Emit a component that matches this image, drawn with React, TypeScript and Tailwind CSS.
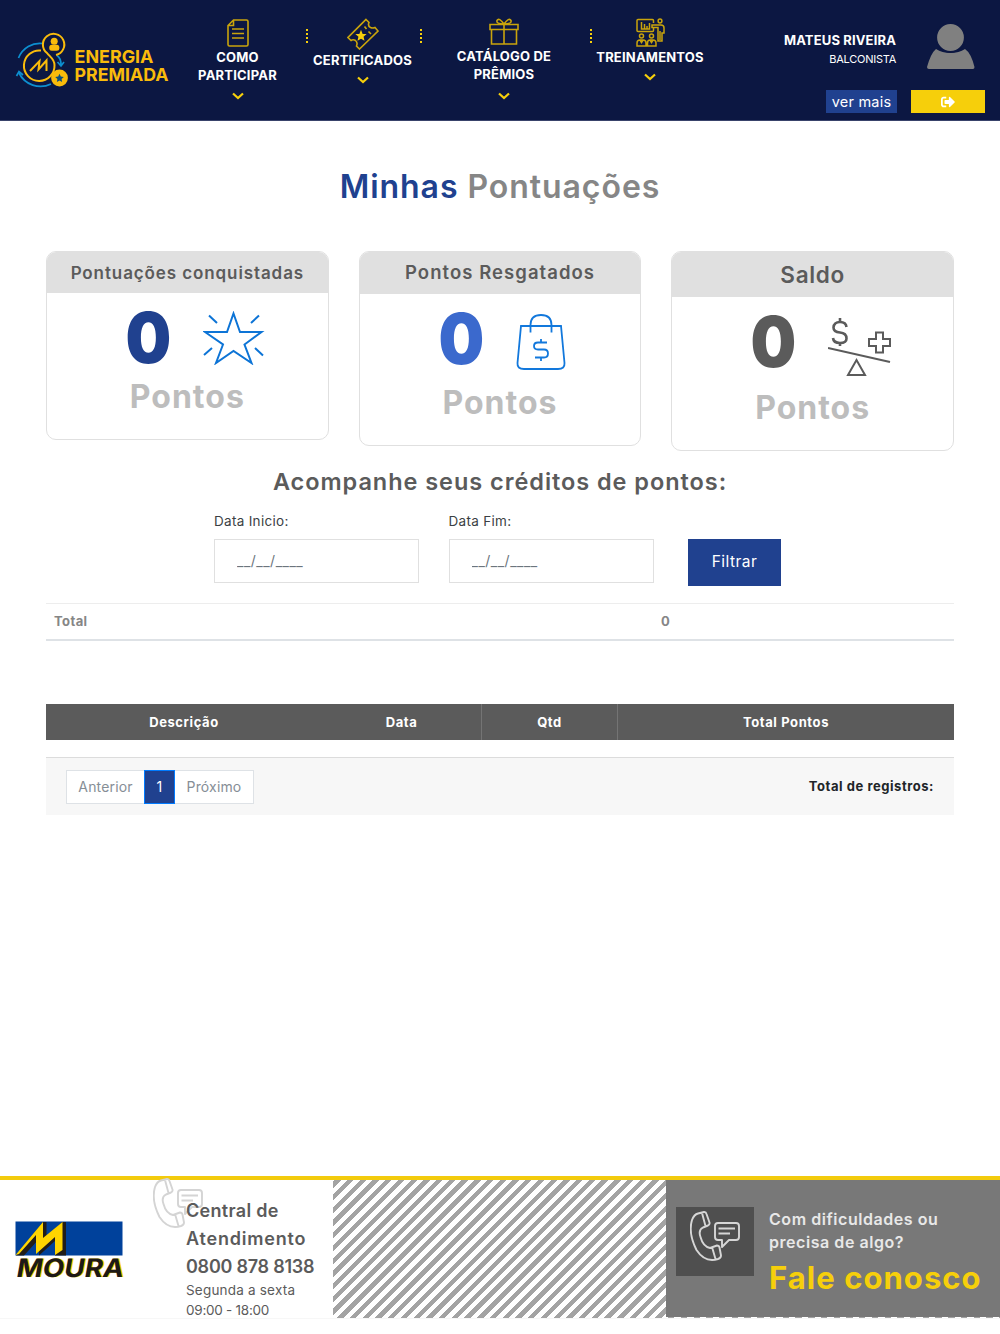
import type { ReactNode } from "react";
import { FaSignOutAlt } from "react-icons/fa";

const YELLOW = "#f6cf0b";
const GOLD = "#c9a40c";

function Logo() {
	return (
		<svg width="164" height="64" viewBox="12 30 164 64" fill="none">
			<g stroke="#0d8fd0" strokeWidth="1.7">
				<path d="M18.5 58A23 23 0 0 1 43 43.5" />
				<path d="M19 73A24 24 0 0 0 51 84" />
				<path d="M16.500 76L19 71.500L23 75" />
				<path d="M57 55.500Q61 58 61 65M57.500 62L61 66L64 62" />
			</g>
			<g stroke="#f9bb0b" strokeWidth="2">
				<path d="M41 50.500A15.300 15.300 0 1 0 54.500 65C54.500 59 50 57 47 53A10.700 10.700 0 1 1 56 55" />
				<path d="M30 71L39.500 61L38.500 69.500L46.500 60.500V71" />
			</g>
			<circle cx="54.200" cy="41.300" r="3.500" fill="#f9bb0b" />
			<rect x="49.300" y="44.700" width="10" height="6" rx="2.500" fill="#f9bb0b" />
			<circle cx="59.500" cy="78" r="8.400" fill="#f9bb0b" />
			<path
				d="M59.500 73.700l1.300 2.800 3 .4-2.200 2.100.5 3-2.600-1.500-2.600 1.500.5-3-2.200-2.100 3-.4z"
				fill="#0b4f7c"
			/>
			<g
				fill="#f9bb0b"
				fontFamily="Inter, 'Liberation Sans', sans-serif"
				fontWeight="700"
				fontSize="18"
			>
				<text x="74.500" y="63" textLength="79" lengthAdjust="spacingAndGlyphs">
					ENERGIA
				</text>
				<text x="74.500" y="80.500" textLength="94" lengthAdjust="spacingAndGlyphs">
					PREMIADA
				</text>
			</g>
		</svg>
	);
}

function Chevron() {
	return (
		<svg width="12" height="8" viewBox="0 0 12 8" fill="none">
			<path d="M1 1.500L6 6L11 1.500" stroke={YELLOW} strokeWidth="2.200" />
		</svg>
	);
}

function Dots() {
	return (
		<svg width="2" height="15" viewBox="0 0 2 15" className="mt-[29px]">
			{[0, 4, 8, 12].map((y) => (
				<rect key={y} y={y} width="2" height="2" fill={YELLOW} />
			))}
		</svg>
	);
}

function DocumentIcon() {
	return (
		<svg width="22" height="28" viewBox="0 0 22 28" fill="none" stroke={GOLD} strokeWidth="1.600">
			<path d="M6.500 1H19.500Q21 1 21 2.500V25.500Q21 27 19.500 27H2.500Q1 27 1 25.500V6.500ZM6.500 1V6.500H1" />
			<path d="M5 10H17M5 14.500H17M5 19H17" />
		</svg>
	);
}

function TicketIcon() {
	return (
		<svg width="32" height="32" viewBox="0 0 32 32" fill="none" stroke={GOLD} strokeWidth="1.600">
			<path d="M19 1.500L22 4.500Q20.500 8 23.500 9.500Q26 10.500 28 9.500L31 13L12.500 31L9.500 28Q11 24.500 8.500 22.500Q6 21 4 22.500L1 19.500Z" />
			<path d="M17.500 8.500L19.500 11M21.500 13.500L24 16" />
			<path
				d="M14 14l1 2.500 2.700.2-2 1.800.6 2.700-2.300-1.400-2.300 1.400.6-2.700-2-1.800 2.700-.2z"
				fill={YELLOW}
				stroke={YELLOW}
			/>
		</svg>
	);
}

function GiftIcon() {
	return (
		<svg width="30" height="27" viewBox="0 0 30 27" fill="none" stroke={GOLD} strokeWidth="1.600">
			<path d="M1 6.500H29V11.500H1ZM2.500 11.500V26H27.500V11.500M15 6.500V26" />
			<path d="M15 6Q7 6 8 2.500Q10 -1 15 6Q20 -1 22 2.500Q23 6 15 6" />
		</svg>
	);
}

function TrainingIcon() {
	return (
		<svg width="29" height="29" viewBox="0 0 29 29" fill="none" stroke={GOLD} strokeWidth="1.500">
			<path d="M17.500 5V2.500Q17.500 1.500 16.500 1.500H2Q1 1.500 1 2.500V12.500Q1 13.500 2 13.500H16.500Q17.500 13.500 17.500 12.500V9" />
			<path d="M5.500 4V11H8.500V6M8.500 11H11V8M11 11H13.500V5" />
			<circle cx="24" cy="3" r="1.900" />
			<path d="M16 7H25Q28 7 28 10V15H26V23H22V9.500H16ZM24 13V22" />
			<circle cx="5.500" cy="18" r="2" />
			<circle cx="15.500" cy="18" r="2" />
			<path d="M1 28V25Q1 22 4 22H7Q10 22 10 25V28ZM11.500 28V25Q11.500 22 14 22H17Q20 22 20 25V28ZM4 22L5.500 24.500L7 22M14 22L15.500 24.500L17 22" />
		</svg>
	);
}

function StarIcon() {
	return (
		<svg width="62" height="54" viewBox="0 0 62 54" fill="none" stroke="#0d74d6" strokeWidth="2">
			<path d="M30.500 2.500L37 21H58.500L41.500 33.500L48.500 52L30.500 40L13 52L20 33.500L2 21H24Z" />
			<path d="M6 4.500L14 12M56 4.500L48 12M1 44L9 37M60 44.500L52 37" />
		</svg>
	);
}

function BagIcon() {
	return (
		<svg width="50" height="56" viewBox="0 0 50 56" fill="none" stroke="#1278dc" strokeWidth="1.800">
			<path d="M5 12H45L48.500 49Q49 55 42 55H8Q1 55 1.500 49Z" />
			<path d="M14.500 18.500V11Q14.500 1 25 1T35.500 11V18.500" />
			<path d="M31 28.500H22Q18 28.500 18 32T22 35.500H28Q32 35.500 32 39.500T28 43.500H19M25 25V28.500M25 43.500V47" />
		</svg>
	);
}

function BalanceIcon() {
	return (
		<svg width="63" height="60" viewBox="0 0 63 60" fill="none" stroke="#5b5b5b" strokeWidth="2">
			<path d="M0 31L62 45" />
			<path d="M28.500 43L37 58H20Z" />
			<path d="M48 15.500H55V22H62V29H55V35.500H48V29H41V22H48Z" />
			<path
				d="M18.500 10Q18 5 12 5T5.500 10.500Q5.500 15 12 15.500T18.500 21.500Q18.500 26 12 26T5 21M12 1V5M12 26V29"
				strokeWidth="2.600"
			/>
		</svg>
	);
}

function PhoneIcon({ className, color }: { className?: string; color: string }) {
	return (
		<svg
			width="50"
			height="50"
			viewBox="0 0 50 50"
			fill="none"
			stroke={color}
			strokeWidth="1.900"
			strokeLinejoin="round"
			className={className}
		>
			<path d="M8 2.500L14 1Q16 .8 16.500 3L19.500 11.500Q20 13.500 18 14.500L13 16.500Q8 19 10.500 26Q13 35.500 20 37L27 34.500Q29 34.500 29.500 36.500L31 44.500Q31 47 28 48Q15 52 6.500 39Q-2 22 2 9Q4 3.500 8 2.500ZM12 2L15.500 15M22 36L25.500 48" />
			<path d="M28 12H46Q49 12 49 15V26Q49 29 46 29H39L32 36V29H28Q25 29 25 26V15Q25 12 28 12ZM28.500 17.500H45M28.500 22.500H40" />
		</svg>
	);
}

function MouraLogo() {
	return (
		<svg width="116" height="62" viewBox="0 0 116 62">
			<rect x=".5" y=".5" width="107" height="34" fill="#00419b" />
			<path
				d="M1 34.500L28 1L31.500 1V15L47.500 1H51V34.500H40V20L24 34.500V18L9 34.500Z"
				fill="#211d19"
			/>
			<path d="M.5 34L28 1V17L47.500 1V29L40 34V16L21 33V14L4 33Z" fill="#ffd500" />
			<g
				fontFamily="Inter, 'Liberation Sans', sans-serif"
				fontWeight="700"
				fontSize="25.500"
				transform="skewX(-10)"
			>
				<text x="12" y="56.500" textLength="107" lengthAdjust="spacingAndGlyphs" fill="#ffd500">
					MOURA
				</text>
				<text x="10.500" y="56" textLength="107" lengthAdjust="spacingAndGlyphs" fill="#1d1917">
					MOURA
				</text>
			</g>
		</svg>
	);
}

function NavItem({
	icon,
	lines,
	className,
}: {
	icon: ReactNode;
	lines: string[];
	className: string;
}) {
	return (
		<div className={`flex shrink-0 flex-col items-center ${className}`}>
			{icon}
			<div className="mt-px text-center text-[13px] leading-[18.400px] font-bold tracking-[0.200px] whitespace-nowrap">
				{lines.map((line) => (
					<div key={line}>{line}</div>
				))}
			</div>
			<div className="mt-[7px]">
				<Chevron />
			</div>
		</div>
	);
}

function Header() {
	return (
		<header className="flex h-[121px] items-start border-b border-[#39436b] bg-[#0c1742] text-white">
			<div className="w-[178px] shrink-0 pt-[30px] pl-3">
				<Logo />
			</div>
			<NavItem icon={<DocumentIcon />} lines={["COMO", "PARTICIPAR"]} className="w-[119px] pt-[19px]" />
			<div className="flex w-5 justify-center">
				<Dots />
			</div>
			<NavItem icon={<TicketIcon />} lines={["CERTIFICADOS"]} className="w-[91px] pt-[18px]" />
			<div className="flex w-[26px] justify-center">
				<Dots />
			</div>
			<NavItem
				icon={<GiftIcon />}
				lines={["CATÁLOGO DE", "PRÊMIOS"]}
				className="w-[140px] gap-px pt-[18px]"
			/>
			<div className="flex w-[34px] justify-center">
				<Dots />
			</div>
			<NavItem icon={<TrainingIcon />} lines={["TREINAMENTOS"]} className="w-[84px] pt-[18px]" />
			<div className="ml-auto flex flex-col items-end pt-[31px]">
				<p className="pr-px text-[13px] leading-[18px] font-bold tracking-[0.150px] whitespace-nowrap">
					MATEUS RIVEIRA
				</p>
				<p className="mt-[2px] pr-px text-[11px] leading-4 tracking-[-0.250px]">BALCONISTA</p>
				<button className="mt-[23px] h-[23px] w-[71px] bg-[#20418f] text-[14.500px] leading-[23px] tracking-[0.200px]">
					ver mais
				</button>
			</div>
			<div className="mr-[15px] ml-[14px] flex w-[74px] shrink-0 flex-col items-center pt-[23px]">
				<svg width="48" height="46" viewBox="0 0 48 46" className="ml-[5px]">
					<path
						d="M9 26Q15 30 23.500 30Q32 30 38 26Q44 30 47.500 44Q47.500 46 46 46H2Q0 46 0 44Q4 30 9 26Z"
						fill="#808080"
					/>
					<circle cx="23.500" cy="14.500" r="14.300" fill="#808080" stroke="#0c1742" strokeWidth="1.800" />
				</svg>
				<button className="mt-[21px] flex h-[23px] w-full items-center justify-center bg-[#f6cf0b]">
					<FaSignOutAlt size={14} />
				</button>
			</div>
		</header>
	);
}

const cards = [
	{
		title: "Pontuações conquistadas",
		icon: <StarIcon />,
		box: "h-[189px]",
		head: "h-[41px] pt-[2px] text-[17px] tracking-[0.900px]",
		row: "mt-[18px] h-[54px]",
		zero: "text-[#20418f]",
		label: "mt-[14px]",
	},
	{
		title: "Pontos Resgatados",
		icon: <BagIcon />,
		box: "h-[195px]",
		head: "h-[42px] text-[18.500px] tracking-[1.050px]",
		row: "mt-[20px] h-[56px]",
		zero: "pb-[6px] text-[#3b69cd]",
		label: "mt-[15px]",
	},
	{
		title: "Saldo",
		icon: <BalanceIcon />,
		box: "h-[200px]",
		head: "h-[45px] pt-px text-[22.500px] tracking-[0.700px]",
		row: "mt-[20px] h-[60px]",
		zero: "pb-[10px] text-[#5b5b5b]",
		label: "mt-[13px]",
	},
];

function ScoreCards() {
	return (
		<div className="mt-[43px] flex h-[201px] items-start gap-[30px]">
			{cards.map((card) => (
				<div
					key={card.title}
					className={`flex-1 overflow-hidden rounded-[10px] border-[1.500px] border-[#e0e0e0] ${card.box}`}
				>
					<div
						className={`flex items-center justify-center bg-[#e0e0e0] font-semibold text-[#5b5b5b] ${card.head}`}
					>
						{card.title}
					</div>
					<div className={`flex items-center pl-[79px] ${card.row}`}>
						<div
							className={`flex w-[45px] scale-x-92 justify-center text-[70px] leading-none font-black ${card.zero}`}
						>
							0
						</div>
						<div className="ml-8">{card.icon}</div>
					</div>
					<p
						className={`text-center text-[32px] leading-9 font-bold tracking-[1px] text-[#bdbdbd] ${card.label}`}
					>
						Pontos
					</p>
				</div>
			))}
		</div>
	);
}

function DateField({ label }: { label: string }) {
	return (
		<label className="block w-[205px] text-[13.500px] leading-5 tracking-[0.300px] text-[#3b3f44]">
			{label}
			<input
				placeholder="__/__/____"
				className="mt-2 block h-11 w-full border-[1.500px] border-[#e0e0e0] px-[22px] pb-[2px] text-[14px] tracking-[0.500px] placeholder:text-[#6c757d]"
			/>
		</label>
	);
}

function Footer() {
	return (
		<footer className="mt-[361px] flex h-[143px] border-t-4 border-b border-t-[#f3cb0d] border-b-[#f7f7f7]">
			<div className="flex w-[333px] shrink-0">
				<div className="w-[153px] pt-[41px] pl-[15px]">
					<MouraLogo />
				</div>
				<div className="relative pt-[17px] pl-[33px] text-[#5b5b5b]">
					<PhoneIcon color="#d4d4d4" className="absolute -top-[2px] left-0" />
					<div className="relative text-[18px] leading-7 font-semibold whitespace-nowrap">
						<p className="tracking-[0.300px]">Central de</p>
						<p className="tracking-[0.800px]">Atendimento</p>
						<p className="tracking-[-0.250px]">0800 878 8138</p>
					</div>
					<div className="text-[13.500px] leading-[19.500px] whitespace-nowrap">
						<p className="tracking-[0.200px]">Segunda a sexta</p>
						<p className="tracking-[-0.250px]">09:00 - 18:00</p>
					</div>
				</div>
			</div>
			<div className="flex flex-1 items-start justify-end bg-[repeating-linear-gradient(135deg,#fff_0,#fff_1.200px,#a3a3a3_1.200px,#a3a3a3_5.700px,#fff_5.700px,#fff_9px)]">
				<div className="flex h-[137px] w-[334px] bg-[#787878] pt-[27px] pl-[10px]">
					<div className="h-[69px] w-[78px] shrink-0 bg-[#4f4f4f] pt-1 pl-[14px]">
						<PhoneIcon color="#d6d6d6" />
					</div>
					<div className="pt-px pl-[15px] whitespace-nowrap">
						<p className="text-[16px] leading-[23px] font-semibold tracking-[0.550px] text-[#e8e8e8]">
							Com dificuldades ou
							<br />
							precisa de algo?
						</p>
						<p className="mt-[6px] text-[31px] leading-9 font-bold tracking-[1.050px] text-[#f6cf0b]">
							Fale conosco
						</p>
					</div>
				</div>
			</div>
		</footer>
	);
}

function App() {
	return (
		<div className="min-h-[1334px] w-[1000px] bg-white font-[Inter,'Liberation_Sans',sans-serif]">
			<Header />
			<main className="px-[46px] pt-[44px]">
				<h1 className="text-center text-[32px] leading-[44px] font-semibold tracking-[0.950px] text-[#868686]">
					<span className="text-[#20418f]">Minhas</span> Pontuações
				</h1>
				<div className="-mt-px">
					<ScoreCards />
				</div>
				<h2 className="mt-[14px] text-center text-[23.500px] leading-8 font-semibold tracking-[0.950px] text-[#5b5b5b]">
					Acompanhe seus créditos de pontos:
				</h2>
				<div className="mt-[13px] ml-[168px] flex">
					<DateField label="Data Inicio:" />
					<div className="ml-[29.500px]">
						<DateField label="Data Fim:" />
					</div>
					<button className="mt-7 ml-[34.500px] h-[47px] w-[93px] bg-[#20418f] pb-[2px] text-[15.500px] tracking-[0.450px] text-white">
						Filtrar
					</button>
				</div>
				<div className="mt-[17px] flex h-[38px] items-center border-t border-b-2 border-t-[#ededed] border-b-[#dee2e6] px-2 pt-px text-[13px] font-bold tracking-[0.400px] text-[#868686]">
					<span className="w-[607px]">Total</span>
					<span>0</span>
				</div>
				<div className="mt-[63px] flex h-9 items-center bg-[#5b5b5b] text-center text-[13px] leading-9 font-bold tracking-[0.600px] text-white">
					<div className="w-[276px]">Descrição</div>
					<div className="w-[159px]">Data</div>
					<div className="w-[136px] border-l border-[#747474]">Qtd</div>
					<div className="flex-1 border-l border-[#747474]">Total Pontos</div>
				</div>
				<div className="mt-[17px] flex h-[58px] items-center justify-between border-t border-[#dcdcdc] bg-[#f7f7f7] px-5">
					<div className="flex text-[14px] tracking-[0.150px] text-[#868e96]">
						<button className="h-[34px] w-[78px] border border-r-0 border-[#dee2e6] bg-white">Anterior</button>
						<button className="h-[34px] w-[31px] border border-[#007bff] bg-[#20418f] text-white">1</button>
						<button className="h-[34px] w-[79px] border border-l-0 border-[#dee2e6] bg-white">Próximo</button>
					</div>
					<span className="text-[13px] font-bold tracking-[0.550px] text-[#212529]">Total de registros:</span>
				</div>
			</main>
			<Footer />
		</div>
	);
}

export default App;
